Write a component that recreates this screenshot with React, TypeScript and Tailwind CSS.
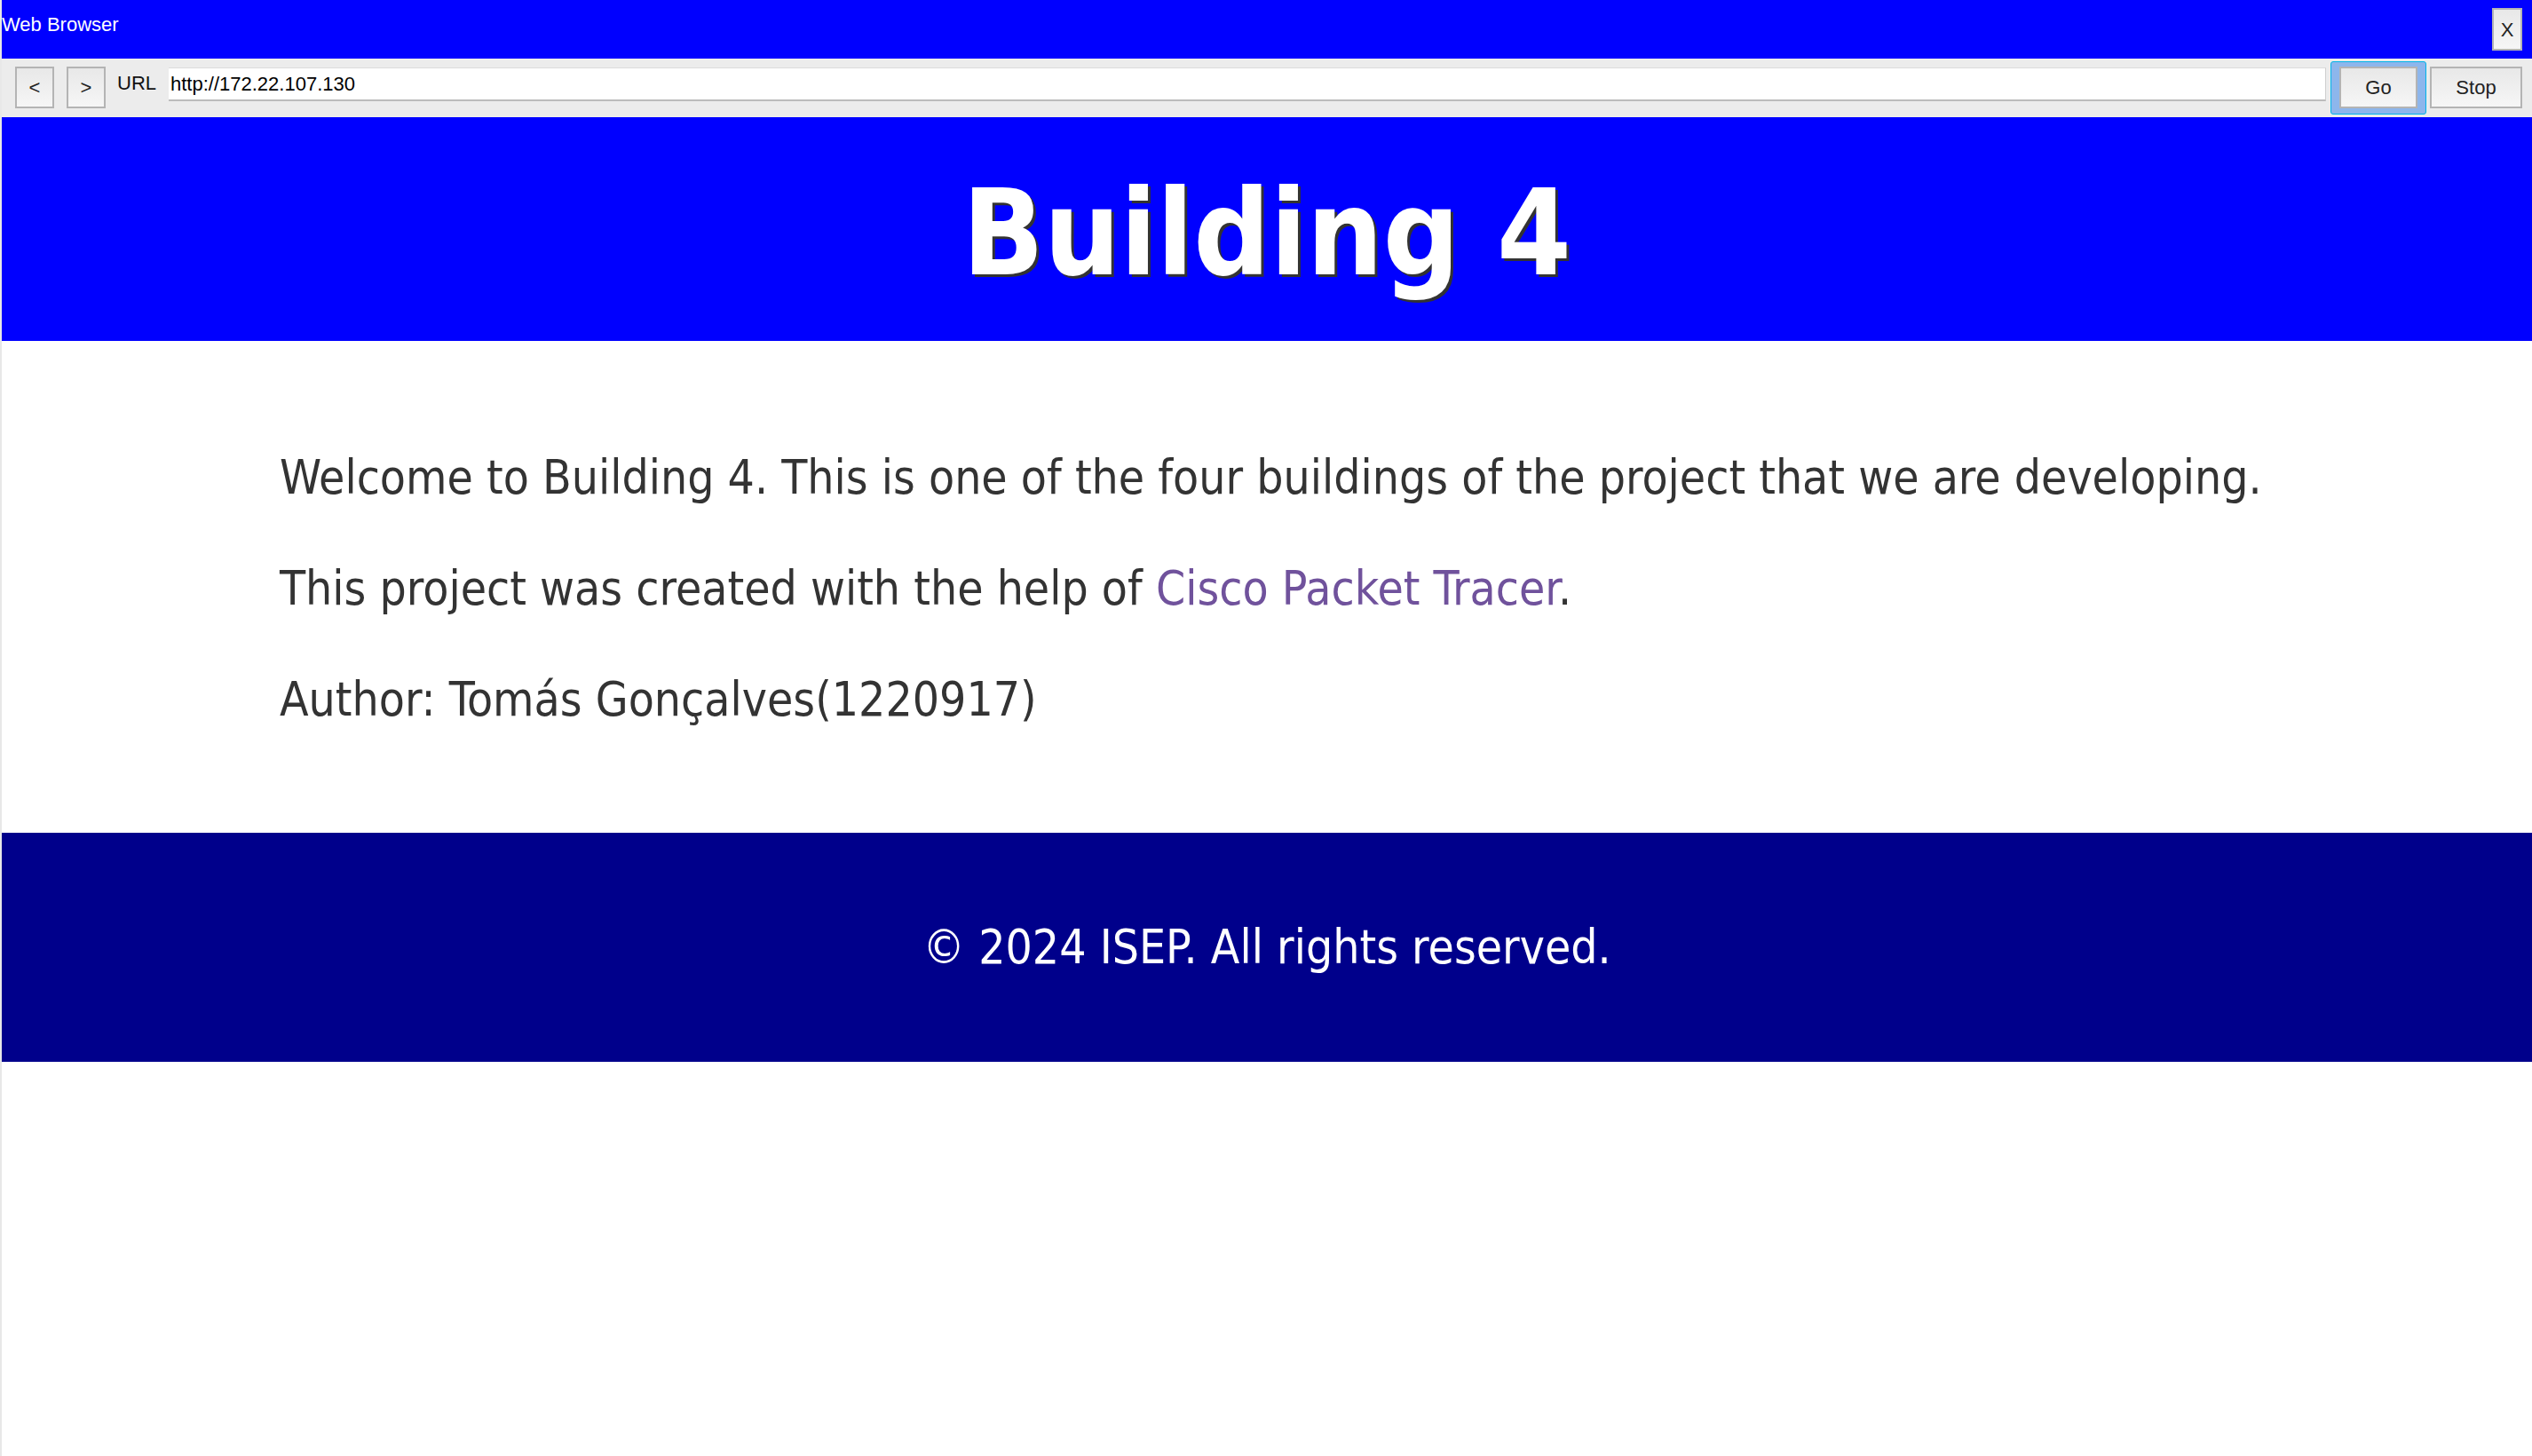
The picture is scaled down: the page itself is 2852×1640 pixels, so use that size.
import React from 'react';

const chromeFont = "font-['Liberation_Sans',Arial,sans-serif]";
const pageFont = "font-['DejaVu_Sans_Condensed','Liberation_Sans',sans-serif]";

const ChromeButton: React.FC<{ label: string; className?: string }> = ({ label, className = '' }) => (
  <div
    className={`flex items-center justify-center h-[47px] border-2 border-[#b4b4b4] bg-gradient-to-b from-[#e8e8e8] to-[#f6f6f6] text-[22px] leading-[26px] text-[#222] ${className}`}
  >
    {label}
  </div>
);

const App: React.FC = () => {
  return (
    <div className="min-h-screen w-full bg-white border-l-2 border-[#e8e8e8] flex flex-col">
      {/* Window title bar */}
      <div className={`h-[66px] bg-[#0000ff] flex justify-between ${chromeFont}`}>
        <div className="pt-[15px] text-[22px] leading-[26px] text-white">Web Browser</div>
        <div className="mt-[9px] mr-[11px] w-[34px] h-[48px] border-2 border-[#b4b4b4] bg-gradient-to-b from-[#e8e8e8] to-[#f6f6f6] flex items-center justify-center text-[22px] text-[#222]">
          X
        </div>
      </div>

      {/* Toolbar */}
      <div className={`h-[66px] bg-[#ececec] flex items-start pl-[15px] pr-[11px] ${chromeFont}`}>
        <ChromeButton label="<" className="mt-[9px] w-[44px]" />
        <ChromeButton label=">" className="mt-[9px] ml-[14px] w-[44px]" />
        <div className="mt-[15px] ml-[13px] text-[22px] leading-[26px] text-[#111]">URL</div>
        <div className="mt-[10px] ml-[14px] flex-1 h-[38px] bg-white border-t border-t-[#dcdcdc] border-r border-r-[#cfcfcf] border-b-2 border-b-[#bcbcbc] pl-[2px] pt-[5px] text-[22px] leading-[26px] text-black">
          http://172.22.107.130
        </div>
        <div className="mt-[3px] ml-[5px] rounded-[3px] border border-[#00b4ea] bg-[#8db6ec] px-[9px] pt-[5px] pb-[6px]">
          <ChromeButton label="Go" className="w-[88px]" />
        </div>
        <ChromeButton label="Stop" className="mt-[9px] ml-[4px] w-[104px]" />
      </div>

      {/* Page header */}
      <header className={`h-[252px] bg-[#0000ff] flex items-center justify-center pt-[10px] ${pageFont}`}>
        <h1 className="text-[134px] font-bold leading-none text-white [text-shadow:3px_3px_0_#333333]">
          Building 4
        </h1>
      </header>

      {/* Page content */}
      <main className={`pt-[119px] pb-[115px] pl-[313px] flex flex-col gap-[55px] text-[53px] leading-[70px] text-[#333333] ${pageFont}`}>
        <p>Welcome to Building 4. This is one of the four buildings of the project that we are developing.</p>
        <p>
          This project was created with the help of{' '}
          <a href="#" className="text-[#70529c]">
            Cisco Packet Tracer
          </a>
          .
        </p>
        <p>Author: Tomás Gonçalves(1220917)</p>
      </main>

      {/* Page footer */}
      <footer className={`h-[258px] bg-[#00008b] flex items-center justify-center text-[53px] leading-[70px] text-white ${pageFont}`}>
        <p>© 2024 ISEP. All rights reserved.</p>
      </footer>

      <div className="flex-1 bg-white" />
    </div>
  );
};

export default App;
